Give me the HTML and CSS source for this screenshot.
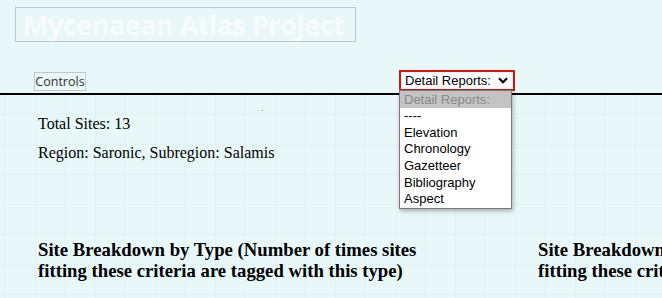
FILE: index.html
```html
<!DOCTYPE html>
<html lang="en">
<head>
<meta charset="utf-8">
<title>Mycenaean Atlas Project</title>
<link rel="stylesheet" href="styles.css">
</head>
<body>
<header class="masthead">
  <div class="title">Mycenaean Atlas Project</div>
</header>
<nav class="toolbar">
  <button class="controls" type="button">Controls</button>
  <div class="report-select">
    <div class="select-box">
      <span class="select-label">Detail Reports:</span>
      <svg class="chevron" width="10" height="7" viewBox="0 0 10 7"><path d="M1 1.2 L5 5.2 L9 1.2" fill="none" stroke="#000" stroke-width="2.2"/></svg>
    </div>
    <ul class="options">
      <li class="option selected">Detail Reports:</li>
      <li class="option">----</li>
      <li class="option">Elevation</li>
      <li class="option">Chronology</li>
      <li class="option">Gazetteer</li>
      <li class="option">Bibliography</li>
      <li class="option">Aspect</li>
    </ul>
  </div>
</nav>
<main class="content">
  <span class="speck"></span>
  <div class="stats">
    <p>Total Sites: 13</p>
    <p>Region: Saronic, Subregion: Salamis</p>
  </div>
  <div class="columns">
    <section class="column">
      <h3>Site Breakdown by Type (Number of times sites fitting these criteria are tagged with this type)</h3>
    </section>
    <section class="column">
      <h3>Site Breakdown by Type (Number of times sites fitting these criteria are tagged with this type)</h3>
    </section>
  </div>
</main>
</body>
</html>
```
FILE: styles.css
```css
html, body {
  margin: 0;
  padding: 0;
  height: 100%;
  overflow: hidden;
  background: #e8f7f8;
  font-family: "Liberation Serif", "Times New Roman", serif;
  color: #000;
}

.masthead {
  padding: 7px 0 0 15px;
}

.title {
  box-sizing: border-box;
  width: 341px;
  height: 35px;
  border: 1px solid #c4c8c8;
  font-family: "Open Sans", sans-serif;
  font-weight: 700;
  font-size: 27px;
  line-height: 33px;
  letter-spacing: -0.5px;
  color: #f6fcfc;
  padding-left: 7px;
  white-space: nowrap;
}

.toolbar {
  display: flex;
  align-items: flex-end;
  margin-top: 28px;
  padding: 0 0 2px 34px;
  border-bottom: 2px solid #000;
}

.controls {
  box-sizing: border-box;
  height: 19px;
  width: 52px;
  margin: 0;
  padding: 0;
  border: 1px solid #c4c8c8;
  background: transparent;
  font-family: "Open Sans", sans-serif;
  font-size: 12.5px;
  line-height: 16px;
  color: #333;
}

.report-select {
  position: relative;
  margin-left: 313px;
  font-family: "Liberation Sans", Arial, sans-serif;
  font-size: 13px;
}

.select-box {
  box-sizing: border-box;
  width: 116px;
  height: 21px;
  border: 2px solid #e50c0c;
  background: #fff;
  display: flex;
  align-items: center;
  justify-content: space-between;
  padding: 0 5px 0 4px;
}

.select-label {
  line-height: 17px;
}

.options {
  position: absolute;
  left: 0;
  top: 20px;
  box-sizing: border-box;
  width: 113px;
  margin: 0;
  padding: 0;
  list-style: none;
  background: #fff;
  border: 1px solid #7a7a7a;
  box-shadow: 1px 2px 4px rgba(0, 0, 0, 0.3);
  z-index: 2;
}

.option {
  height: 16.7px;
  line-height: 16.7px;
  padding-left: 4px;
  white-space: nowrap;
}

.option.selected {
  background: #c3c3c3;
  color: #8a8a8a;
  height: 17px;
  line-height: 17px;
}

.content {
  position: relative;
  padding: 20px 0 40px 8px;
  min-height: 300px;
  background-image:
    linear-gradient(to right, rgba(0, 60, 60, 0.018) 1px, transparent 1px),
    linear-gradient(to bottom, rgba(0, 60, 60, 0.018) 1px, transparent 1px);
  background-size: 30px 30px;
  background-position: 5px 19px;
}

.speck {
  position: absolute;
  left: 262px;
  top: 15px;
  width: 1px;
  height: 1px;
  background: #888;
}

.stats {
  display: flex;
  flex-direction: column;
  gap: 11px;
  padding-left: 30px;
}

.stats p {
  margin: 0;
  font-size: 16px;
  line-height: 18px;
}

.columns {
  display: flex;
  margin-top: 77px;
}

.column {
  flex: 0 0 500px;
  box-sizing: border-box;
  padding: 0 80px 0 30px;
}

.column h3 {
  margin: 0;
  font-size: 18.72px;
  line-height: 21px;
  font-weight: 700;
}
```
